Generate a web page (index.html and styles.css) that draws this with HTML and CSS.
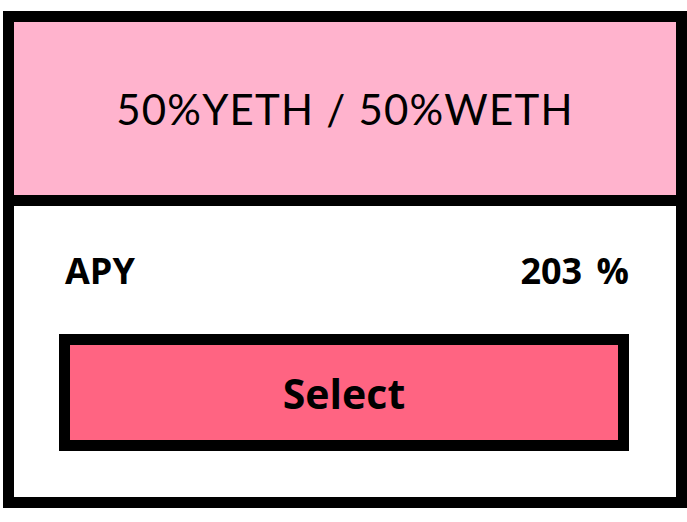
FILE: index.html
```html
<!DOCTYPE html>
<html>
<head>
<meta charset="utf-8">
<link rel="stylesheet" href="styles.css">
</head>
<body>
<div class="card">
  <div class="card-header">50%YETH / 50%WETH</div>
  <div class="card-body">
    <div class="apy-row">
      <span class="label">APY</span>
      <span class="value">203 %</span>
    </div>
    <button class="select-btn">Select</button>
  </div>
</div>
</body>
</html>
```

FILE: styles.css
```css
html, body {
  margin: 0;
  padding: 0;
  background: #ffffff;
}
body {
  padding: 11px 0 0 3px;
}
.card {
  box-sizing: border-box;
  width: 684px;
  height: 497px;
  border: 11px solid #000;
  display: flex;
  flex-direction: column;
  background: #fff;
}
.card-header {
  height: 173px;
  flex: none;
  border-bottom: 11px solid #000;
  background: #ffb3cd;
  display: flex;
  align-items: center;
  justify-content: center;
  font-family: "Lato", "Open Sans", sans-serif;
  font-size: 42px;
  letter-spacing: 1.2px;
  color: #000;
}
.card-body {
  flex: 1;
  padding: 40px 47px 0 45px;
  display: flex;
  flex-direction: column;
}
.apy-row {
  display: flex;
  justify-content: space-between;
  align-items: center;
  height: 49px;
  padding: 0 0 0 6px;
  font-family: "Open Sans", sans-serif;
  font-weight: 700;
  font-size: 36px;
  color: #000;
}
.value {
  word-spacing: 5px;
}
.select-btn {
  margin-top: 39px;
  box-sizing: border-box;
  height: 117px;
  width: 100%;
  border: 11px solid #000;
  background: #ff6482;
  font-family: "Open Sans", sans-serif;
  font-weight: 700;
  font-size: 41px;
  color: #000;
  padding: 0;
  cursor: pointer;
}
```
